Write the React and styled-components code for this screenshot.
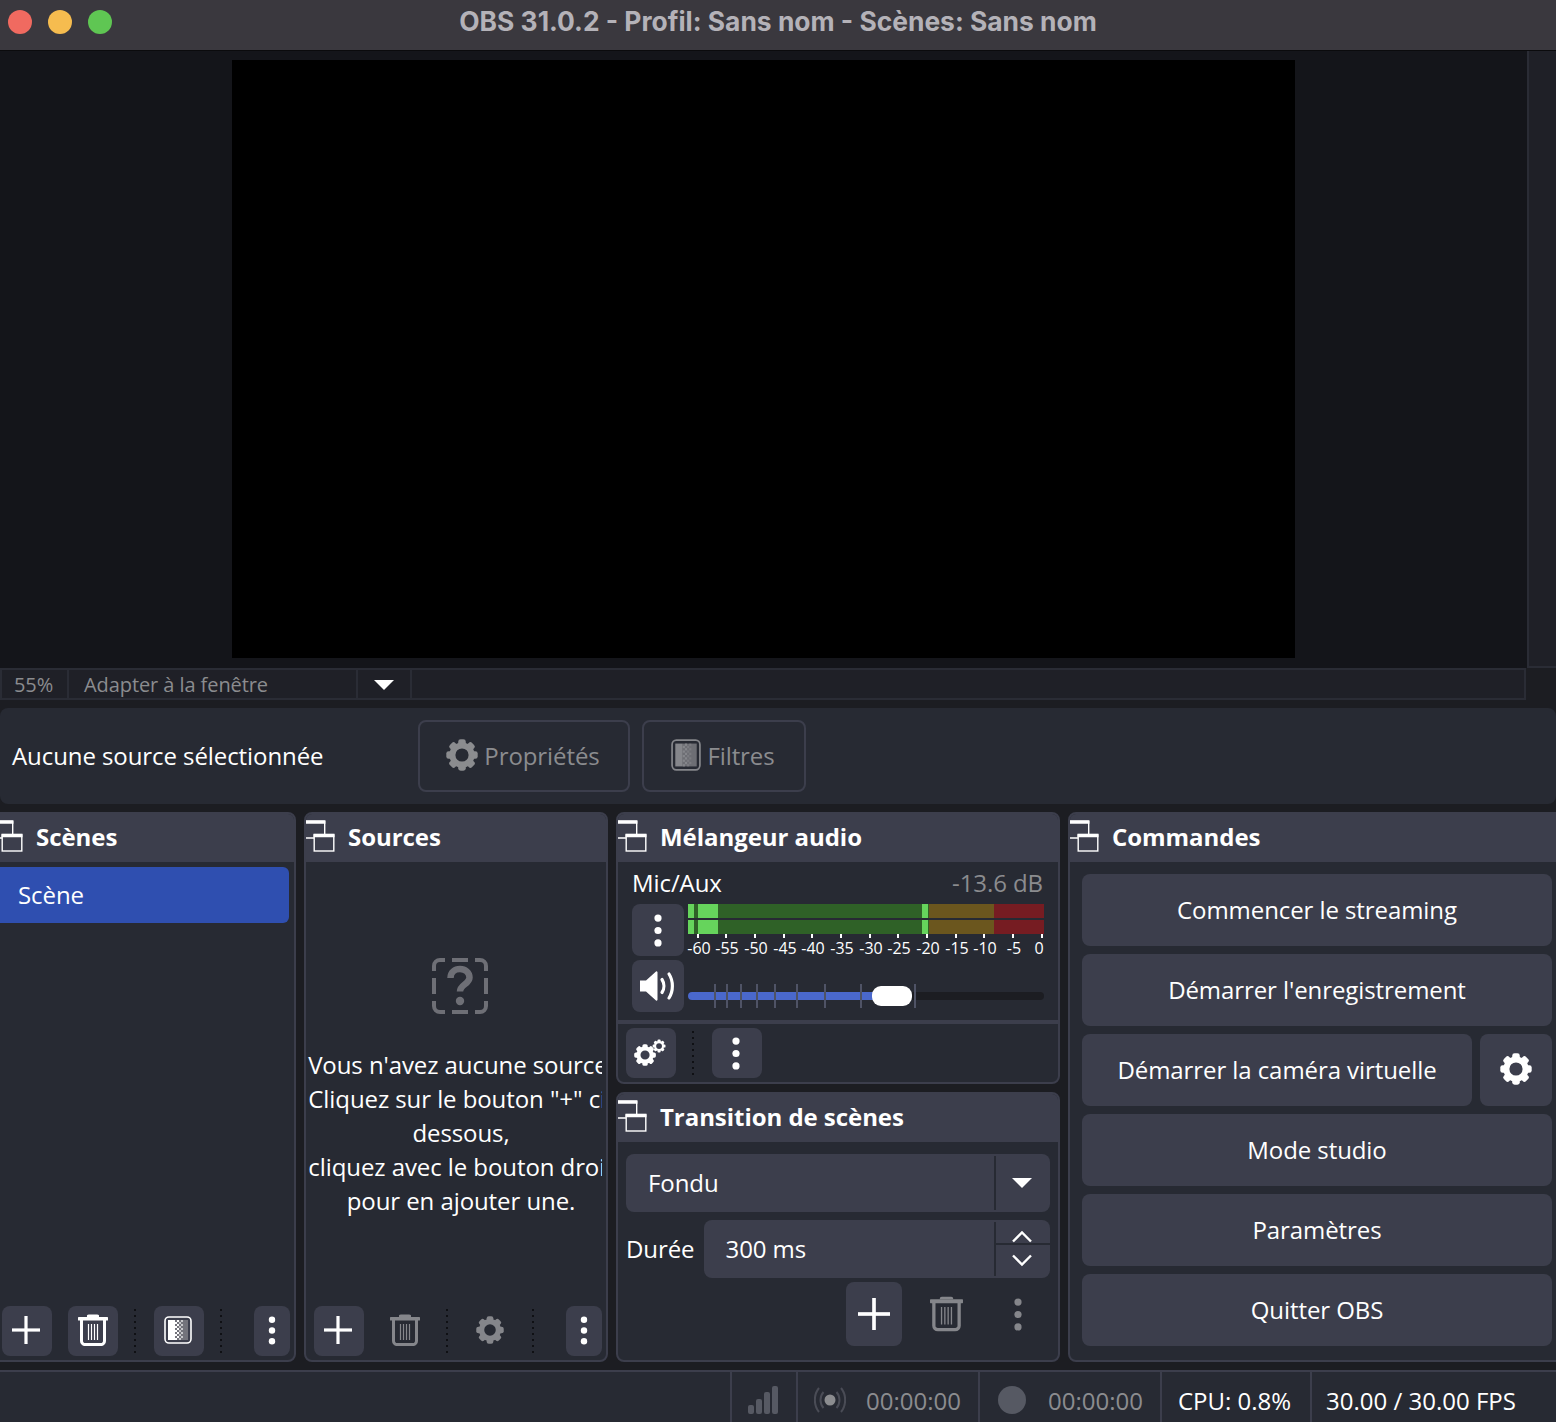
import React from 'react';
import styled, { createGlobalStyle } from 'styled-components';

const C = { page: '#1c1d22', panel: '#272a33', raised: '#3c3e4c', dim: '#8b8c8f', blue: '#2f4fb0' };

const Global = createGlobalStyle`
  html, body { margin: 0; padding: 0; background: ${C.page}; }
  * { box-sizing: border-box; }
`;

const Page = styled.div`
  width: 1556px; height: 1422px; overflow: hidden; display: flex; flex-direction: column;
  background: ${C.page}; color: #fff; font-family: "Open Sans", "Liberation Sans", sans-serif; font-size: 24px; letter-spacing: -0.08px;
`;
const TitleBar = styled.header`
  height: 51px; flex: none; display: flex; align-items: center; position: relative;
  background: #3a383e; border-bottom: 1px solid #0b0b0d; padding-left: 8px; gap: 16px;
`;
const Light = styled.span`
  width: 24px; height: 24px; border-radius: 50%; background: ${p => p.$c}; margin-top: -6px;
`;
const WindowTitle = styled.h1`
  position: absolute; left: 0; right: 0; top: 3px; margin: 0; text-align: center; letter-spacing: 0;
  font: 700 26.4px/36px Inter, "Liberation Sans", sans-serif; color: #b4b2b8;
`;
const PreviewArea = styled.section`
  height: 617px; flex: none; display: flex; background: #14151a;
`;
const PreviewPane = styled.div`
  flex: 1; display: flex; align-items: flex-start; justify-content: center; padding-top: 9px;
`;
const Canvas = styled.div`width: 1063px; height: 598px; background: #000;`;
const ScrollStrip = styled.div`
  width: 29px; flex: none; background: #1f2027; border-left: 2px solid #2a2c35; border-bottom: 2px solid #2a2c35;
`;

const ZoomBar = styled.div`
  height: 32px; flex: none; margin: 0 30px 8px 0; display: flex; background: #1f2027;
  border: 2px solid #2a2c35; color: ${C.dim}; font-size: 20px; line-height: 28px;
`;
const ZoomCell = styled.div`
  width: ${p => p.$w}px; flex: ${p => (p.$w ? 'none' : 1)}; padding: 1px 0 0 ${p => p.$pad || 0}px;
  border-right: ${p => (p.$w ? '2px solid #2a2c35' : 'none')}; display: flex; align-items: center; white-space: nowrap;
`;
const Caret = styled.i`
  display: block; width: 0; height: 0; margin: ${p => p.$m || 'auto'};
  border-left: ${p => p.$s}px solid transparent; border-right: ${p => p.$s}px solid transparent;
  border-top: ${p => p.$h}px solid #fff;
`;

const ContextBar = styled.section`
  height: 96px; flex: none; margin-bottom: 8px; display: flex; align-items: center; padding: 0 12px;
  background: ${C.panel}; border-radius: 8px;
`;
const ContextLabel = styled.div`width: 406px; flex: none; white-space: nowrap; padding-bottom: 2px;`;
const OutlineButton = styled.button`
  height: 72px; width: ${p => p.$w}px; flex: none; margin-right: 12px; padding: 0 2px 2px 0; display: flex; align-items: center; justify-content: center; gap: 6px;
  background: transparent; border: 2px solid ${C.raised}; border-radius: 8px; color: ${C.dim}; font: inherit; letter-spacing: inherit;
`;

const Docks = styled.main`
  height: 550px; flex: none; display: flex; gap: 8px; margin: 0 -8px 8px -8px;
`;
const Column = styled.div`width: 444px; flex: none; display: flex; flex-direction: column; gap: 8px;`;
const Dock = styled.section`
  width: ${p => (p.$w ? p.$w + 'px' : 'auto')}; height: ${p => (p.$h ? p.$h + 'px' : 'auto')};
  flex: ${p => (p.$w || p.$h ? 'none' : 1)}; display: flex; flex-direction: column; overflow: hidden;
  background: ${C.panel}; border: 2px solid ${C.raised}; border-radius: 8px;
`;
const DockHead = styled.header`
  height: 48px; flex: none; background: ${C.raised}; display: flex; align-items: center; gap: 13px;
  margin-left: -3px; padding-bottom: 4px; font-weight: 700; font-size: 24px; letter-spacing: -0.05px;
  svg { flex: none; }
`;
const DockBody = styled.div`flex: 1; min-height: 0; display: flex; flex-direction: column;`;
const SceneItem = styled.div`
  height: 56px; flex: none; margin: 5px 5px 0 6px; padding: 0 0 2px 18px; display: flex; align-items: center;
  background: ${C.blue}; border-radius: 0 6px 6px 0;
`;
const Toolbar = styled.div`
  height: ${p => p.$h || 54}px; flex: none; display: flex; align-items: flex-start; gap: 16px; padding: ${p => p.$pad || '0 4px 0 8px'};
  margin-top: ${p => (p.$end ? 0 : 'auto')}; justify-content: ${p => (p.$end ? 'flex-end' : 'flex-start')};
  ${p => (p.$lift ? 'button { padding-bottom: 2px; }' : '')}
`;
const IconButton = styled.button`
  width: ${p => p.$w || 50}px; height: ${p => p.$ht || 50}px; flex: none; padding: 0 ${p => p.$nudge || 0}px 0 0; display: flex; align-items: center; justify-content: center;
  margin-left: ${p => (p.$push ? 'auto' : 0)};
  background: ${p => (p.$flat ? 'transparent' : C.raised)}; border: 0; border-radius: 8px; color: ${p => (p.$off ? '#85868b' : '#fff')};
`;
const DotSep = styled.span`
  width: 2px; height: 44px; margin: 3px 2px 0 0; flex: none;
  background: repeating-linear-gradient(to bottom, #0f1014 0 2px, transparent 2px 6px);
`;
const Empty = styled.div`flex: 1; display: flex; flex-direction: column; overflow: hidden;`;
const EmptyIcon = styled.div`margin: 96px 0 0 126px; height: 56px; color: #6e6f76;`;
const EmptyText = styled.p`
  width: 310px; flex: none; margin: 34px 0 0; text-align: center; line-height: 34px; white-space: nowrap;
`;
const EmptyClip = styled.div`width: 296px; overflow: hidden; display: flex;`;

const Channel = styled.div`padding: 0 14px 8px; flex: none;`;
const ChannelHead = styled.div`
  height: 42px; display: flex; justify-content: space-between; align-items: center; padding-bottom: 2px;
`;
const Db = styled.span`color: ${C.dim}; margin-right: 1px;`;
const ChannelRow = styled.div`display: flex; gap: 4px; margin-bottom: 4px; &:last-child { margin-bottom: 0; }`;
const MeterCol = styled.div`flex: 1; min-width: 0;`;
const MeterBar = styled.div`display: flex; height: 14px; margin-bottom: 2px; &:nth-child(2) { margin-bottom: 0; }`;
const Seg = styled.span`width: ${p => p.$w}px; flex: none; background: ${p => p.$c};`;
const Scale = styled.div`display: flex; margin-left: -4px; height: 22px;`;
const ScaleCell = styled.div`
  width: ${p => p.$w}px; flex: none; display: flex; flex-direction: column; align-items: center; position: relative;
`;
const Tick = styled.span`width: 2px; height: 4px; flex: none; background: #fff;`;
const ScaleLabel = styled.span`
  font-size: 16px; line-height: 20px; letter-spacing: 0; white-space: nowrap; transform: translateX(${p => p.$x || 1}px);
`;
const Slider = styled.div`position: relative; height: 24px; margin-top: 24px;`;
const Track = styled.div`
  position: absolute; left: 0; right: 0; top: 8px; height: 8px; border-radius: 4px; background: #1c1d22; overflow: hidden;
`;
const TrackFill = styled.div`height: 100%; background: #4a68cc;`;
const SliderTick = styled.span`position: absolute; top: 0; width: 2px; height: 24px; background: #4f5366;`;
const Handle = styled.div`
  position: absolute; left: 184px; top: 2px; width: 40px; height: 20px; border-radius: 9px; background: #fff;
`;
const Divider = styled.div`height: 4px; flex: none; background: ${C.raised};`;

const Field = styled.div`
  height: 58px; flex: ${p => (p.$grow ? 1 : 'none')}; margin: ${p => p.$m || 0}; display: flex; align-items: center; background: ${C.raised}; border-radius: 8px;
  padding-left: 22px; position: relative;
`;
const FieldText = styled.span`flex: 1; padding-bottom: 2px;`;
const FieldSide = styled.div`
  width: 56px; height: 54px; flex: none; border-left: 2px solid ${C.panel}; display: flex; flex-direction: column; align-items: center; justify-content: center;
`;
const SpinUp = styled.div`
  height: 23px; width: 100%; flex: none; display: flex; align-items: flex-end; justify-content: center; padding: 0 2px 1px 0; margin-bottom: -2px;
  overflow: hidden;
`;
const SpinLine = styled.div`height: 2px; width: 100%; flex: none; background: ${C.panel}; position: relative;`;
const SpinDown = styled.div`
  flex: 1; width: 100%; display: flex; align-items: flex-start; justify-content: center; padding: 8px 2px 0 0;
`;
const ChevronSvg = styled.svg`transform: ${p => (p.$up ? 'rotate(180deg)' : 'none')}; flex: none;`;
const FieldRow = styled.div`display: flex; align-items: center; gap: 9px; margin: 8px 8px 0;`;
const FieldLabel = styled.span`padding-bottom: 2px;`;

const CommandList = styled.div`flex: 1; padding: 12px 10px 0 12px; display: flex; flex-direction: column; gap: 8px;`;
const CommandRow = styled.div`display: flex; gap: 8px;`;
const Command = styled.button`
  height: 72px; flex: ${p => (p.$square ? '0 0 72px' : p.$wide ? 1 : 'none')}; display: flex; align-items: center; justify-content: center;
  background: ${C.raised}; border: 0; border-radius: 8px; color: #fff; font: inherit; letter-spacing: inherit; padding: 0 0 2px;
`;

const StatusBar = styled.footer`
  height: 52px; flex: none; display: flex; justify-content: flex-end; background: ${C.panel}; border-top: 2px solid ${C.raised}; letter-spacing: 0;
`;
const StatusCell = styled.div`
  width: ${p => p.$w}px; flex: none; display: flex; align-items: center; gap: ${p => p.$gap || 0}px; padding-left: ${p => p.$pad || 0}px;
  border-left: 2px solid ${C.raised}; white-space: nowrap; color: ${p => (p.$dim ? C.dim : '#fff')}; padding-top: 6px;
`;
const RecDot = styled.span`width: 28px; height: 28px; flex: none; border-radius: 50%; background: #565963;`;

const GearShape = ({ color = '#fff', stroke = 6 }) => (
  <>
    <circle cx="16" cy="16" r="9.600" fill="none" stroke={color} strokeWidth={stroke} />
    {[0, 45, 90, 135, 180, 225, 270, 315].map(a => (
      <rect key={a} x="12.200" y="0.300" width="7.600" height="7" rx="2.400" fill={color} transform={`rotate(${a} 16 16)`} />
    ))}
  </>
);
const Gear = ({ size = 32 }) => (
  <svg width={size} height={size} viewBox="0 0 32 32"><GearShape color="currentColor" /></svg>
);
const DoubleGear = () => (
  <svg width="34" height="30" viewBox="0 0 34 30">
    <g transform="translate(0 6) scale(0.69)"><GearShape /></g>
    <g transform="translate(18.500 1.500) scale(0.41)"><GearShape stroke={5} /></g>
  </svg>
);
const DockIcon = () => (
  <svg width="32" height="32" viewBox="0 0 32 32" fill="none" stroke="#fff" strokeWidth="1.400">
    <path d="M11 18H1.700V1H21.700V14" />
    <path d="M1 2.200H22.400" strokeWidth="3" />
    <rect x="11.200" y="14.400" width="19.600" height="16.600" />
    <path d="M10.500 15.800H31.500" strokeWidth="3" />
  </svg>
);
const Plus = ({ size = 28 }) => (
  <svg width={size} height={size} viewBox="0 0 28 28" fill="#fff">
    <rect x="12.400" y="0" width="3.200" height="28" />
    <rect x="0" y="12.400" width="28" height="3.200" />
  </svg>
);
const Trash = ({ scale = 1 }) => (
  <svg width={30 * scale} height={32 * scale} viewBox="0 0 30 32" fill="none" stroke="currentColor">
    <path d="M11 .6h8a2 2 0 0 1 2 2.400H9a2 2 0 0 1 2-2.400Z" fill="currentColor" stroke="none" />
    <rect x="0" y="3" width="30" height="3.600" rx=".6" fill="currentColor" stroke="none" />
    <path d="M3.500 6v21a3.600 3.600 0 0 0 3.600 3.600h15.800a3.600 3.600 0 0 0 3.600-3.600V6" strokeWidth="3" />
    <path d="M10.500 10v16M13.500 10v16M16.500 10v16M19.500 10v16" strokeWidth="1.200" />
  </svg>
);
const Dots = ({ color = '#fff', r = 3.600, gap = 12.400 }) => (
  <svg width="12" height={2 * gap + 2 * r + 1} viewBox={`0 0 12 ${2 * gap + 2 * r + 1}`} fill={color}>
    {[0, 1, 2].map(i => <circle key={i} cx="6" cy={r + 0.5 + i * gap} r={r} />)}
  </svg>
);
const FilterIcon = ({ color = '#fff', mid = '#85868b', w = 28, h = 28 }) => (
  <svg width={w} height={h} viewBox="0 0 28 28" preserveAspectRatio="none" fill="none">
    <rect x="1" y="1" width="26" height="26" rx="4" stroke={color} strokeWidth="1.600" />
    <rect x="4" y="4" width="7" height="20" fill={color} />
    <rect x="11" y="4" width="13" height="20" fill={mid} opacity="0.75" />
    {Array.from({ length: 10 }).map((_, i) => (
      <g key={i}>
        <rect x={i % 2 ? 11 : 13} y={4 + i * 2} width="2" height="2" fill={color} />
        <rect x={i % 2 ? 15 : 17} y={4 + i * 2} width="2" height="2" fill={color} opacity="0.6" />
      </g>
    ))}
  </svg>
);
const Speaker = () => (
  <svg width="38" height="34" viewBox="0 0 38 34" fill="none">
    <path d="M1 11.500h6L17 2.500a1 1 0 0 1 1.500 1v27a1 1 0 0 1-1.500 1L7 22.500H1Z" fill="#fff" />
    <path d="M23 10.500c2.500 3.800 2.500 9.200 0 13" stroke="#fff" strokeWidth="3.200" strokeLinecap="round" />
    <path d="M30 5c4.500 7 4.500 17 0 24" stroke="#fff" strokeWidth="3.200" strokeLinecap="round" />
  </svg>
);
const Chevron = ({ up }) => (
  <ChevronSvg $up={up} width="22" height="14" viewBox="0 0 22 14" fill="none" stroke="#fff" strokeWidth="2.400">
    <path d="M2 2.500l9 9 9-9" />
  </ChevronSvg>
);
const QuestionIcon = () => (
  <svg width="56" height="56" viewBox="0 0 56 56" fill="none" stroke="currentColor" strokeWidth="4">
    <path d="M13 2H8a6 6 0 0 0-6 6v5M43 2h5a6 6 0 0 1 6 6v5M13 54H8a6 6 0 0 1-6-6v-5M43 54h5a6 6 0 0 0 6-6v-5" />
    <path d="M20 2h16M20 54h16M2 20v16M54 20v16" />
    <path d="M18.500 20c0-5.500 4.300-9 9.500-9s9.500 3.500 9.500 8.500c0 6.500-9.500 7-9.500 14" strokeWidth="6.500" />
    <circle cx="28" cy="43" r="4.200" fill="currentColor" stroke="none" />
  </svg>
);
const SignalBars = () => (
  <svg width="30" height="28" viewBox="0 0 30 28" fill="#565963">
    <rect x="0" y="19" width="6" height="9" rx="2" />
    <rect x="8" y="13" width="6" height="15" rx="2" />
    <rect x="16" y="6" width="6" height="22" rx="2" />
    <rect x="24" y="0" width="6" height="28" rx="2" />
  </svg>
);
const Broadcast = () => (
  <svg width="32" height="28" viewBox="0 0 32 28" fill="none" stroke="#4a4c56" strokeWidth="2">
    <circle cx="16" cy="14" r="5.500" fill="#8b8c8f" stroke="none" />
    <path d="M9.500 6c-4 4.500-4 11.500 0 16M22.500 6c4 4.500 4 11.500 0 16" />
    <path d="M5 2C-.5 8.500-.5 19.500 5 26M27 2c5.500 6.500 5.500 17.500 0 24" />
  </svg>
);

const scale = [['-60', 28], ['-55', 28], ['-50', 30], ['-45', 28], ['-40', 28], ['-35', 30], ['-30', 28], ['-25', 28], ['-20', 30], ['-15', 28], ['-10', 28], ['-5', 30], ['0', 28]];
const segs = [[6, '#66d45c'], [4, '#2f6127'], [20, '#66d45c'], [204, '#2f6127'], [6, '#66d45c'], [1, '#2f6127'], [65, '#6b561e'], [50, '#761c22']];
const sliderTicks = [27, 39, 53, 69, 87, 109, 137, 173, 227];

const Meter = () => (
  <MeterBar>{segs.map(([w, c], i) => <Seg key={i} $w={w} $c={c} />)}</MeterBar>
);

export default function App() {
  return (
    <Page>
      <Global />
      <TitleBar>
        <Light $c="#f06a60" /><Light $c="#f6bc4f" /><Light $c="#5fc653" />
        <WindowTitle>OBS 31.0.2 - Profil: Sans nom - Scènes: Sans nom</WindowTitle>
      </TitleBar>
      <PreviewArea>
        <PreviewPane><Canvas /></PreviewPane>
        <ScrollStrip />
      </PreviewArea>
      <ZoomBar>
        <ZoomCell $w={67} $pad={12}>55%</ZoomCell>
        <ZoomCell $w={289} $pad={15}>Adapter à la fenêtre</ZoomCell>
        <ZoomCell $w={54}><Caret $s={10} $h={10} /></ZoomCell>
        <ZoomCell />
      </ZoomBar>
      <ContextBar>
        <ContextLabel>Aucune source sélectionnée</ContextLabel>
        <OutlineButton $w={212}><Gear size={32} />Propriétés</OutlineButton>
        <OutlineButton $w={164}><FilterIcon w={30} h={32} color="#85868b" />Filtres</OutlineButton>
      </ContextBar>
      <Docks>
        <Dock $w={304}>
          <DockHead><DockIcon />Scènes</DockHead>
          <DockBody>
            <SceneItem>Scène</SceneItem>
            <Toolbar $lift>
              <IconButton $nudge={2}><Plus /></IconButton>
              <IconButton><Trash /></IconButton>
              <DotSep />
              <IconButton $nudge={2}><FilterIcon /></IconButton>
              <DotSep />
              <IconButton $w={36} $push><Dots r={3.200} gap={10.800} /></IconButton>
            </Toolbar>
          </DockBody>
        </Dock>
        <Dock $w={304}>
          <DockHead><DockIcon />Sources</DockHead>
          <DockBody>
            <Empty>
              <EmptyIcon><QuestionIcon /></EmptyIcon>
              <EmptyClip>
                <EmptyText>
                  Vous n'avez aucune source.<br />
                  Cliquez sur le bouton "+" ci-<br />
                  dessous,<br />
                  cliquez avec le bouton droit<br />
                  pour en ajouter une.
                </EmptyText>
              </EmptyClip>
            </Empty>
            <Toolbar $lift>
              <IconButton $nudge={2}><Plus /></IconButton>
              <IconButton $flat $off><Trash /></IconButton>
              <DotSep />
              <IconButton $flat $off $nudge={2}><Gear size={28} /></IconButton>
              <DotSep />
              <IconButton $w={36} $push><Dots r={3.200} gap={10.800} /></IconButton>
            </Toolbar>
          </DockBody>
        </Dock>
        <Column>
          <Dock $h={272}>
            <DockHead><DockIcon />Mélangeur audio</DockHead>
            <DockBody>
              <Channel>
                <ChannelHead><span>Mic/Aux</span><Db>-13.6 dB</Db></ChannelHead>
                <ChannelRow>
                  <IconButton $w={52} $ht={52}><Dots /></IconButton>
                  <MeterCol>
                    <Meter />
                    <Meter />
                    <Scale>
                      {scale.map(([t, w], i) => (
                        <ScaleCell key={t} $w={w}>
                          <Tick />
                          <ScaleLabel $x={i === 12 ? -3 : 1}>{t}</ScaleLabel>
                        </ScaleCell>
                      ))}
                    </Scale>
                  </MeterCol>
                </ChannelRow>
                <ChannelRow>
                  <IconButton $w={52} $ht={52}><Speaker /></IconButton>
                  <MeterCol>
                    <Slider>
                      <Track><TrackFill style={{ width: '54%' }} /></Track>
                      {sliderTicks.map(x => <SliderTick key={x} style={{ left: x - 1 }} />)}
                      <Handle />
                    </Slider>
                  </MeterCol>
                </ChannelRow>
              </Channel>
              <Divider />
              <Toolbar $pad="4px 8px 0" $h={58}>
                <IconButton><DoubleGear /></IconButton>
                <DotSep />
                <IconButton $nudge={2}><Dots /></IconButton>
              </Toolbar>
            </DockBody>
          </Dock>
          <Dock>
            <DockHead><DockIcon />Transition de scènes</DockHead>
            <DockBody>
              <Field $m="12px 8px 0">
                <FieldText>Fondu</FieldText>
                <FieldSide><Caret $s={10} $h={10} $m="0 0 0 -2px" /></FieldSide>
              </Field>
              <FieldRow>
                <FieldLabel>Durée</FieldLabel>
                <Field $grow>
                  <FieldText>300 ms</FieldText>
                  <FieldSide>
                    <SpinUp><Chevron up /></SpinUp>
                    <SpinLine />
                    <SpinDown><Chevron /></SpinDown>
                  </FieldSide>
                </Field>
              </FieldRow>
              <Toolbar $pad="4px 12px 0" $h={68} $end>
                <IconButton $w={56} $ht={64}><Plus size={32} /></IconButton>
                <IconButton $w={56} $ht={64} $flat $off><Trash scale={1.100} /></IconButton>
                <IconButton $w={56} $ht={64} $flat $off><Dots color="#85868b" /></IconButton>
              </Toolbar>
            </DockBody>
          </Dock>
        </Column>
        <Dock>
          <DockHead><DockIcon />Commandes</DockHead>
          <CommandList>
            <Command>Commencer le streaming</Command>
            <Command>Démarrer l'enregistrement</Command>
            <CommandRow>
              <Command $wide>Démarrer la caméra virtuelle</Command>
              <Command $square><Gear size={32} /></Command>
            </CommandRow>
            <Command>Mode studio</Command>
            <Command>Paramètres</Command>
            <Command>Quitter OBS</Command>
          </CommandList>
        </Dock>
      </Docks>
      <StatusBar>
        <StatusCell $w={66} $pad={16}><SignalBars /></StatusCell>
        <StatusCell $w={182} $pad={16} $gap={20} $dim><Broadcast />00:00:00</StatusCell>
        <StatusCell $w={182} $pad={18} $gap={22} $dim><RecDot />00:00:00</StatusCell>
        <StatusCell $w={150} $pad={16}>CPU: 0.8%</StatusCell>
        <StatusCell $w={246} $pad={14}>30.00 / 30.00 FPS</StatusCell>
      </StatusBar>
    </Page>
  );
}
